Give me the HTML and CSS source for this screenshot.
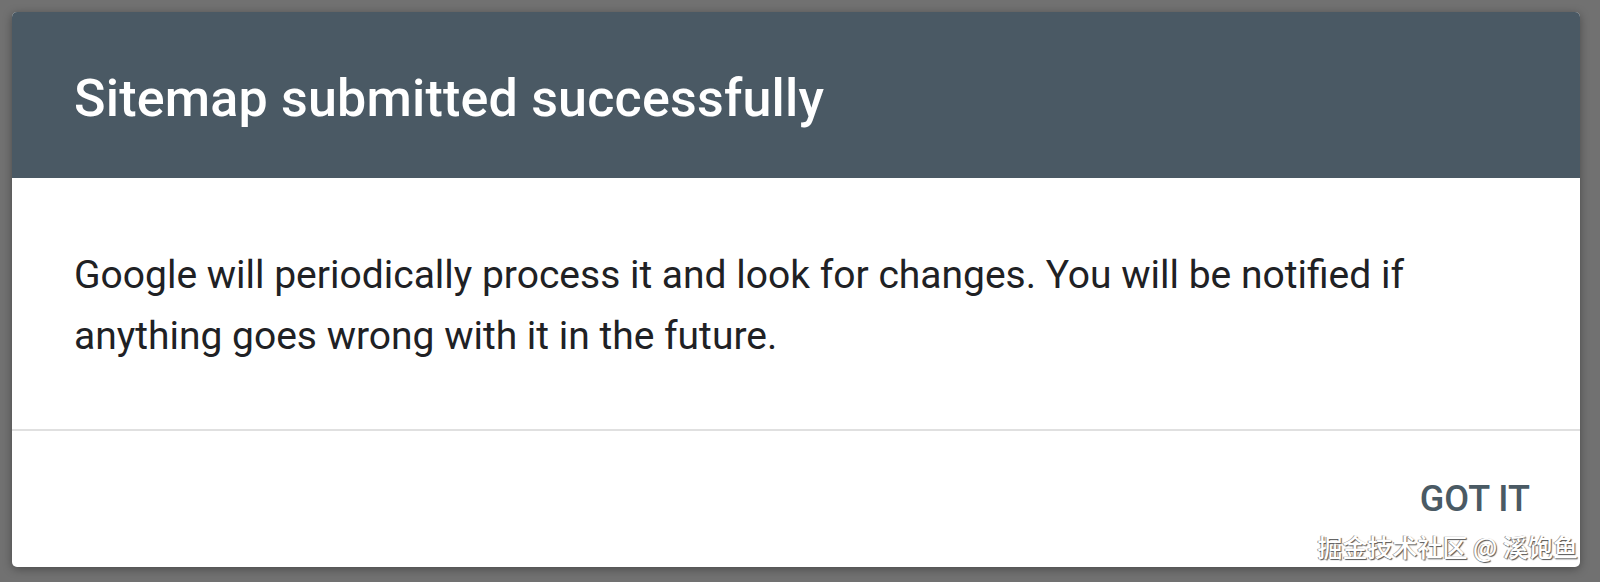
FILE: index.html
```html
<!DOCTYPE html>
<html>
<head>
    <title>Sitemap submitted</title>
    <link rel="stylesheet" href="styles.css">
</head>
<body>
    <div class="backdrop">
        <div class="dialog">
            <div class="dialog-header">
                <h1 class="dialog-title">Sitemap submitted successfully</h1>
            </div>
            <div class="dialog-body">
                <p>Google will periodically process it and look for changes. You will be notified if anything goes wrong with it in the future.</p>
            </div>
            <div class="dialog-footer">
                <button class="btn-text" type="button">Got it</button>
            </div>
        </div>
    </div>
    <div class="watermark">掘金技术社区 @ 溪饱鱼</div>
</body>
</html>
```

FILE: styles.css
```css
body {
    margin: 0;
    font-family: Roboto, "Noto Sans", Arial, sans-serif;
    background: #717171;
    height: 582px;
    overflow: hidden;
    position: relative;
}
.backdrop {
    padding: 12px 20px 0 12px;
}
.dialog {
    background: #fff;
    border-radius: 5px;
    overflow: hidden;
    box-shadow: 0 2px 10px rgba(0, 0, 0, 0.35);
    height: 555px;
    display: flex;
    flex-direction: column;
}
.dialog-header {
    background-color: #4a5964;
    height: 166px;
    display: flex;
    align-items: center;
    padding: 6px 62px 0 62px;
    box-sizing: border-box;
}
.dialog-title {
    margin: 0;
    color: #fff;
    font-size: 52px;
    font-weight: 500;
    letter-spacing: 0.2px;
}
.dialog-body {
    padding: 67px 120px 62px 62px;
    border-bottom: 2px solid #e0e0e0;
}
.dialog-body p {
    margin: 0;
    color: #202124;
    font-size: 39px;
    line-height: 61px;
}
.dialog-footer {
    flex: 1;
    display: flex;
    align-items: center;
    justify-content: flex-end;
    padding: 0 50px 0 0;
}
.btn-text {
    background: none;
    border: none;
    padding: 0;
    font-family: inherit;
    font-size: 36px;
    font-weight: 500;
    text-transform: uppercase;
    color: #4a5a64;
    cursor: pointer;
}
.watermark {
    position: absolute;
    right: 22px;
    bottom: 18px;
    font-family: "Noto Sans CJK SC", sans-serif;
    font-size: 25px;
    font-weight: 500;
    color: #fff;
    text-shadow: 1px 1px 1px #555, -1px 0 0 #999;
}
```
